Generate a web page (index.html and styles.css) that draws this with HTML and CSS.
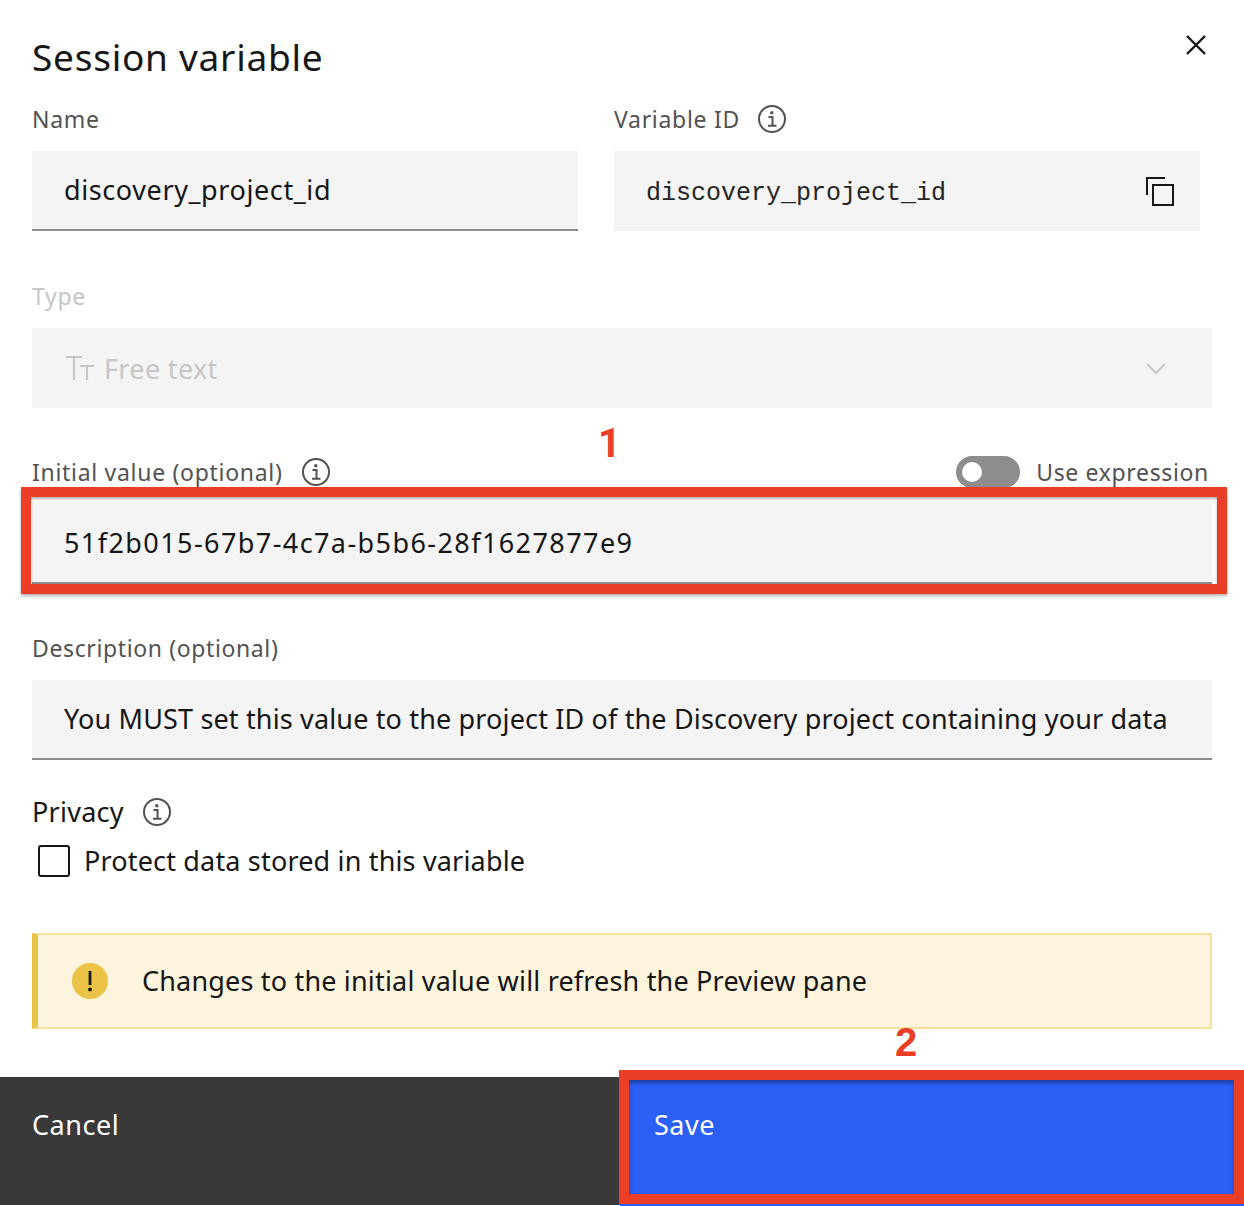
FILE: index.html
```html
<!DOCTYPE html>
<html>
<head>
    <meta charset="UTF-8">
    <title>Session variable</title>
    <link rel="stylesheet" href="styles.css">
</head>
<body>
    <div class="dialog">
        <div class="form">
            <header class="head">
                <h1 class="title">Session variable</h1>
                <button class="close" aria-label="Close">
                    <svg width="20" height="20" viewBox="0 0 20 20"><path d="M1 1 L19 19 M19 1 L1 19" fill="none" stroke="#161616" stroke-width="2.4"/></svg>
                </button>
            </header>

            <div class="two-col">
                <div>
                    <div class="label-row">
                        <label class="label">Name</label>
                    </div>
                    <div class="field underlined name-value">discovery_project_id</div>
                </div>
                <div>
                    <div class="label-row">
                        <label class="label">Variable ID</label>
                        <svg class="info" width="30" height="30" viewBox="0 0 30 30"><circle cx="15" cy="15" r="13" fill="none" stroke="#525252" stroke-width="2"/><circle cx="14.8" cy="8.8" r="1.7" fill="#525252"/><path d="M11.5 13 H15.5 V21.5 M11 21.8 H19.5" fill="none" stroke="#525252" stroke-width="2"/></svg>
                    </div>
                    <div class="field mono-field">
                        <span class="mono">discovery_project_id</span>
                        <svg width="28" height="29" viewBox="0 0 28 29"><path d="M1 18 V1 H19" fill="none" stroke="#161616" stroke-width="2"/><rect x="7" y="8" width="20" height="20" fill="none" stroke="#161616" stroke-width="2"/></svg>
                    </div>
                </div>
            </div>

            <div class="label-row type-label">
                <label class="label disabled">Type</label>
            </div>
            <div class="field select">
                <svg class="tt" width="28" height="24" viewBox="0 0 28 24"><path d="M0 1 H16 M8 1 V24 M14 10 H28 M21 10 V24" fill="none" stroke="#c6c6c6" stroke-width="2.2"/></svg>
                <span class="select-text">Free text</span>
                <svg class="chevron" width="20" height="11" viewBox="0 0 20 11"><path d="M1 1 L10 10 L19 1" fill="none" stroke="#c6c6c6" stroke-width="2"/></svg>
            </div>

            <div class="label-row initial-label">
                <label class="label">Initial value (optional)</label>
                <svg class="info" width="30" height="30" viewBox="0 0 30 30"><circle cx="15" cy="15" r="13" fill="none" stroke="#525252" stroke-width="2"/><circle cx="14.8" cy="8.8" r="1.7" fill="#525252"/><path d="M11.5 13 H15.5 V21.5 M11 21.8 H19.5" fill="none" stroke="#525252" stroke-width="2"/></svg>
                <div class="toggle-wrap">
                    <span class="toggle"><span class="knob"></span></span>
                    <span class="label">Use expression</span>
                </div>
            </div>
            <div class="field underlined tall">51f2b015-67b7-4c7a-b5b6-28f1627877e9</div>

            <div class="label-row desc-label">
                <label class="label">Description (optional)</label>
            </div>
            <div class="field underlined desc-value">You MUST set this value to the project ID of the Discovery project containing your data</div>

            <div class="label-row privacy-label">
                <span class="privacy">Privacy</span>
                <svg class="info" width="30" height="30" viewBox="0 0 30 30"><circle cx="15" cy="15" r="13" fill="none" stroke="#525252" stroke-width="2"/><circle cx="14.8" cy="8.8" r="1.7" fill="#525252"/><path d="M11.5 13 H15.5 V21.5 M11 21.8 H19.5" fill="none" stroke="#525252" stroke-width="2"/></svg>
            </div>
            <div class="check-row">
                <span class="checkbox"></span>
                <span class="check-text">Protect data stored in this variable</span>
            </div>

            <div class="notice">
                <svg class="notice-icon" width="36" height="36" viewBox="0 0 36 36"><circle cx="18" cy="18" r="18" fill="#ebc447"/><rect x="16.6" y="8" width="2.8" height="14" fill="#161616"/><circle cx="18" cy="26.5" r="2" fill="#161616"/></svg>
                <span class="notice-text">Changes to the initial value will refresh the Preview pane</span>
            </div>
        </div>

        <footer class="foot">
            <button class="btn cancel">Cancel</button>
            <button class="btn save">Save</button>
        </footer>

        <!-- annotations drawn on top of the screenshot -->
        <div class="mark mark-one"></div>
        <div class="mark mark-two"></div>
        <span class="num num-one">1</span>
        <span class="num num-two">2</span>
    </div>
</body>
</html>
```

FILE: styles.css
```css
* { box-sizing: border-box; }
body { margin: 0; background: white; font-family: "Noto Sans", Arial, sans-serif; color: #161616; }
.dialog { position: relative; width: 1244px; height: 1206px; overflow: hidden; }
.form { padding: 0 32px; }

.head { display: flex; justify-content: space-between; align-items: flex-start; height: 104px; }
.title { margin: 31px 0 0; font-size: 37px; line-height: 52px; font-weight: 400; letter-spacing: 0.75px; }
.close { margin: 35px 6px 0 0; padding: 0; width: 20px; height: 20px; border: none; background: none; }

.two-col { display: grid; grid-template-columns: 546px 586px; column-gap: 36px; }
.label-row { display: flex; align-items: center; height: 32px; margin-bottom: 15px; }
.label { padding-bottom: 2px; font-size: 23px; line-height: 30px; color: #525252; letter-spacing: 0.7px; }
.label.disabled { color: #c6c6c6; }
.info { margin: -2px 0 0 18px; }
.two-col .info { margin-left: 17px; }

.field { display: flex; align-items: center; height: 80px; padding: 0 32px; background: #f4f4f4; font-size: 27px; letter-spacing: 0.25px; }
.underlined { border-bottom: 2px solid #8d8d8d; }
.name-value { padding-bottom: 1px; letter-spacing: 0.6px; }
.desc-value { padding-bottom: 1px; letter-spacing: 0.15px; }
.tall { height: 81px; letter-spacing: 1.42px; }
.mono-field { justify-content: space-between; padding-right: 26px; }
.mono { padding-top: 4px; font-family: "Liberation Mono", monospace; font-size: 25px; letter-spacing: 0; color: #262626; }

.type-label { margin-top: 50px; }
.select { color: #c6c6c6; padding-left: 34px; padding-right: 46px; letter-spacing: 0.35px; }
.select-text { margin-left: 10px; }
.chevron { margin-left: auto; }

.initial-label { margin-top: 48px; }
.initial-label .label { padding: 0; line-height: 32px; }
.initial-label .info { margin-top: 0; }
.toggle-wrap { display: flex; align-items: center; margin-left: auto; margin-right: 3px; gap: 16px; }
.toggle-wrap .label { letter-spacing: 0.65px; }
.toggle { display: flex; align-items: center; width: 64px; height: 32px; padding-left: 6px; border-radius: 16px; background: #8d8d8d; }
.knob { width: 20px; height: 20px; border-radius: 50%; background: white; }

.desc-label { margin-top: 49px; }
.desc-label .label { letter-spacing: 0.62px; }
.privacy-label { margin-top: 36px; margin-bottom: 17px; }
.privacy { font-size: 27px; line-height: 32px; letter-spacing: 0.25px; }
.privacy-label .info { margin-top: 0; }
.check-row { display: flex; align-items: center; height: 32px; padding-left: 6px; }
.checkbox { width: 32px; height: 32px; border: 2px solid #161616; border-radius: 3px; }
.check-text { margin-left: 14px; padding-bottom: 2px; font-size: 27px; letter-spacing: 0.17px; }

.notice { display: flex; align-items: center; height: 96px; margin-top: 56px; padding-left: 34px; background: #fcf4dc; border: 2px solid #f6e09c; border-left: 6px solid #ebc447; }
.notice-text { margin-left: 34px; padding-bottom: 2px; font-size: 27px; letter-spacing: 0.18px; }

.foot { display: flex; align-items: flex-start; height: 129px; margin-top: 48px; }
.btn { display: flex; align-items: flex-start; height: 100%; padding: 32px 0 0 32px; border: none; color: white; font-family: inherit; font-size: 27px; line-height: 32px; letter-spacing: 0.55px; text-align: left; }
.cancel { width: 620px; height: 128px; background: #393939; }
.save { width: 624px; padding-left: 34px; background: #2b60f6; }

.mark { position: absolute; border: 10px solid #ea3f26; box-shadow: 0 2px 3px rgba(0,0,0,0.3), inset 0 2px 3px rgba(0,0,0,0.3); }
.mark-one { left: 21px; top: 487px; width: 1206px; height: 107px; }
.mark-two { left: 619px; top: 1070px; width: 625px; height: 134px; box-shadow: inset 0 3px 4px rgba(0,0,0,0.35); }
.num { position: absolute; font-family: "Liberation Sans", Arial, sans-serif; font-weight: 700; font-size: 40px; line-height: 40px; color: #ea3f26; }
.num-one { left: 598px; top: 424px; font-family: Roboto, sans-serif; }
.num-two { left: 895px; top: 1022px; }
```
